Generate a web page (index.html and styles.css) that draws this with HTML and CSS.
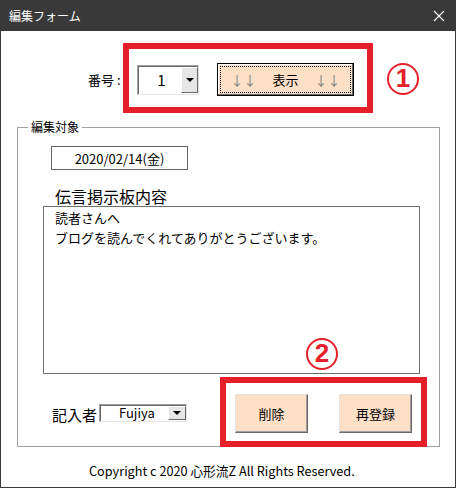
FILE: index.html
```html
<!DOCTYPE html>
<html lang="ja">
<head>
    <meta charset="UTF-8">
    <title>編集フォーム</title>
    <link rel="stylesheet" href="styles.css">
</head>
<body>
<div class="window">
    <div class="title-bar">
        <span class="title">編集フォーム</span>
        <svg class="close" width="12" height="12" viewBox="0 0 12 12">
            <path d="M1 1L11 11M11 1L1 11" stroke="#fff" stroke-width="1.1" fill="none"/>
        </svg>
    </div>
    <div class="form">
        <div class="row-number">
            <span class="label">番号 :</span>
            <div class="combo combo-number">
                <span class="combo-value">1</span>
                <span class="combo-drop"><i></i></span>
            </div>
            <button class="btn-show"><span class="focus"><em>↓↓</em>表示<em>↓↓</em></span></button>
        </div>
        <fieldset class="group">
            <legend>編集対象</legend>
            <div class="date-box">2020/02/14(金)</div>
            <div class="memo-title">伝言掲示板内容</div>
            <div class="memo">読者さんへ<br>ブログを読んでくれてありがとうございます。</div>
            <div class="row-bottom">
                <span class="writer-label">記入者</span>
                <div class="combo combo-writer">
                    <span class="combo-value">Fujiya</span>
                    <span class="combo-drop"><i></i></span>
                </div>
                <button class="btn btn-delete">削除</button>
                <button class="btn btn-save">再登録</button>
            </div>
        </fieldset>
        <p class="copyright">Copyright c 2020 心形流Z All Rights Reserved.</p>
    </div>
    <!-- 説明用の赤枠と番号 -->
    <div class="callout callout-show"></div>
    <div class="callout callout-edit"></div>
    <span class="num num-1">1</span>
    <span class="num num-2">2</span>
</div>
</body>
</html>
```

FILE: styles.css
```css
* {
    box-sizing: border-box;
}

body {
    margin: 0;
    background: #fff;
    font-family: "Noto Sans CJK JP", "Noto Sans", sans-serif;
    color: #000;
}

.window {
    position: relative;
    width: 456px;
    height: 488px;
    border-left: 1px solid #3a3a3a;
    border-right: 1px solid #3a3a3a;
    border-bottom: 1px solid #3a3a3a;
    display: flex;
    flex-direction: column;
}

.title-bar {
    height: 31px;
    margin: 0 -1px;
    padding: 0 11px 0 9px;
    background: #393939;
    color: #fff;
    font-size: 12px;
    display: flex;
    align-items: center;
    justify-content: space-between;
}

.form {
    flex: 1;
}

/* 番号 */
.row-number {
    display: flex;
    align-items: center;
    padding: 32px 0 0 87px;
}

.label {
    width: 49px;
    font-size: 13px;
}

.combo {
    display: flex;
    background: #fff;
    border: 1px solid;
    border-color: #a0a0a0 #e3e3e3 #e3e3e3 #a0a0a0;
    box-shadow: inset 1px 1px 0 #696969;
}

.combo-value {
    flex: 1;
    display: flex;
    align-items: center;
    justify-content: center;
}

.combo-drop {
    width: 17px;
    margin: 1px 0 1px 0;
    background: #e6e6e6;
    border: 1px solid;
    border-color: #fff #696969 #696969 #fff;
    display: flex;
    align-items: center;
    justify-content: center;
}

.combo-drop i {
    width: 0;
    height: 0;
    border-left: 4px solid transparent;
    border-right: 4px solid transparent;
    border-top: 4px solid #000;
}

.combo-number {
    width: 62px;
    height: 30px;
    font-size: 15px;
}

.combo-number .combo-value {
    padding-left: 4px;
}

.btn-show {
    margin-left: 18px;
    width: 137px;
    height: 33px;
    padding: 2px;
    background: #fde0c6;
    border: 1px solid #000;
    box-shadow: inset -1px -1px 0 #696969, inset 1px 1px 0 #fff;
    font-family: inherit;
    font-size: 13px;
}

.btn-show .focus {
    display: flex;
    height: 100%;
    align-items: center;
    justify-content: center;
    gap: 16px;
    border: 1px dotted #000;
}

.btn-show em {
    font-style: normal;
    color: #7d7d7d;
}

/* 編集対象 */
.group {
    width: 423px;
    margin: 23px 0 0 16px;
    padding: 0 0 13px 0;
    border: 1px solid #a0a0a0;
}

.group legend {
    margin-left: 10px;
    padding: 0 3px;
    font-size: 12px;
    line-height: 16px;
}

.date-box {
    width: 137px;
    height: 24px;
    margin: 11px 0 0 33px;
    border: 1px solid #646464;
    font-size: 13px;
    display: flex;
    align-items: center;
    justify-content: center;
}

.memo-title {
    margin: 16px 0 0 37px;
    font-size: 16px;
    line-height: 20px;
}

.memo {
    width: 377px;
    height: 168px;
    margin-left: 25px;
    padding: 1px 11px;
    border: 1px solid #6e6e6e;
    font-size: 13px;
    line-height: 20px;
}

.row-bottom {
    display: flex;
    align-items: center;
    height: 39px;
    margin-top: 20px;
    padding-left: 34px;
}

.writer-label {
    width: 47px;
    font-size: 15px;
    padding-top: 2px;
}

.combo-writer {
    width: 88px;
    height: 18px;
    font-size: 13px;
    margin-top: -2px;
}

.combo-writer .combo-value {
    justify-content: flex-start;
    padding-left: 19px;
}

.combo-writer .combo-drop {
    width: 18px;
}

.btn {
    width: 73px;
    height: 39px;
    background: #fde0c6;
    border: 1px solid;
    border-color: #e3e3e3 #696969 #696969 #e3e3e3;
    box-shadow: inset -1px -1px 0 #a0a0a0;
    font-family: inherit;
    font-size: 13px;
    padding: 0;
}

.btn-delete {
    margin-left: 48px;
}

.btn-save {
    margin-left: 31px;
}

.copyright {
    margin: 16px 0 0 88px;
    font-size: 12.7px;
    line-height: 16px;
}

/* 赤枠と番号 */
.callout {
    position: absolute;
    border: 6px solid #e5202a;
}

.callout-show {
    left: 122px;
    top: 43px;
    width: 250px;
    height: 70px;
}

.callout-edit {
    left: 219px;
    top: 377px;
    width: 207px;
    height: 70px;
}

.num {
    position: absolute;
    width: 32px;
    height: 32px;
    border: 2.5px solid #e5202a;
    border-radius: 50%;
    color: #e5202a;
    font-family: "Liberation Sans", sans-serif;
    font-weight: bold;
    font-size: 26px;
    line-height: 27px;
    text-align: center;
}

.num-1 {
    left: 386px;
    top: 63px;
}

.num-2 {
    left: 305px;
    top: 338px;
}
```
